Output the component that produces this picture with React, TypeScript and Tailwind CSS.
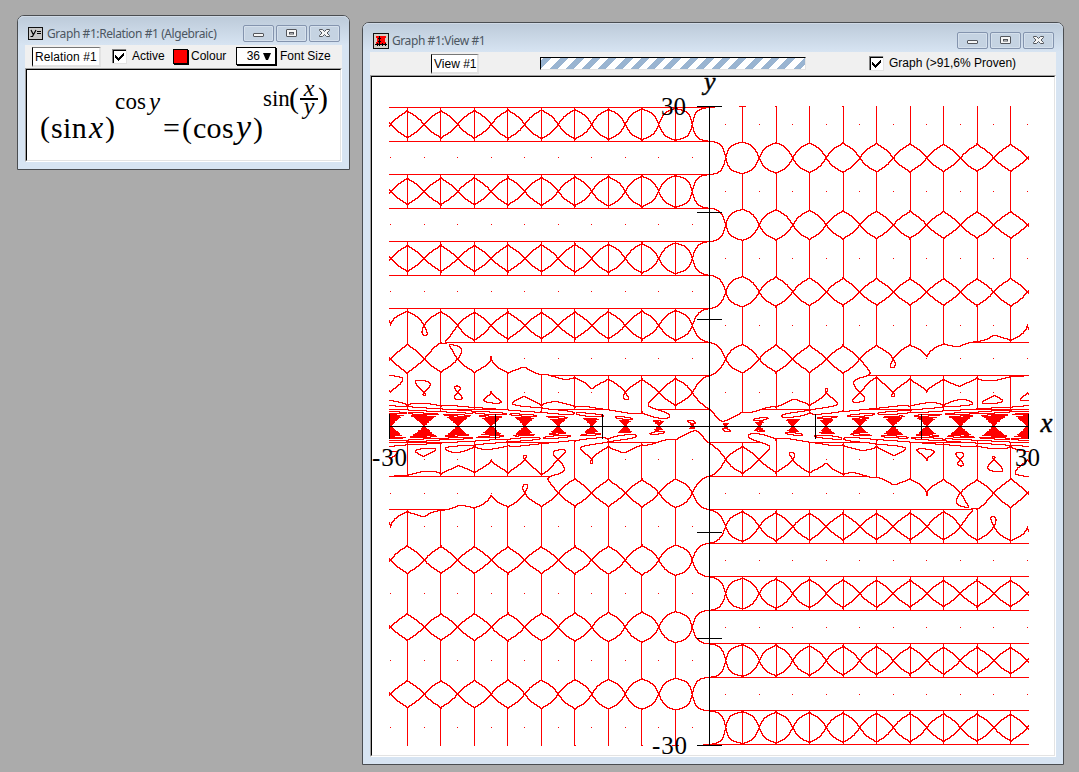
import React, { useMemo } from "react";

const SIZE = 640;
const LIMIT = 30;
const LEFT = 389;
const TOP = 106;

/** Marks every pixel that holds a solution of (sin x)^(cos y) = (cos y)^(sin(x/y)). */
function traceRelation(): string {
  const grid = new Uint8Array(SIZE * SIZE);
  const unit = (2 * LIMIT) / SIZE;

  const scanRows = (from: number, to: number, sub: number) => {
    const n = SIZE * sub + 1;
    const xs = new Float64Array(n);
    const logSin = new Float64Array(n);
    for (let i = 0; i < n; i++) {
      xs[i] = -LIMIT + (i * unit) / sub + 1e-9;
      logSin[i] = Math.log(Math.abs(Math.sin(xs[i])));
    }
    let previous = new Uint8Array(n);
    let current = new Uint8Array(n);
    for (let j = from * sub; j <= to * sub; j++) {
      const y = LIMIT - (j * unit) / sub - 1e-9;
      const c = Math.cos(y);
      const logCos = Math.log(Math.abs(c));
      for (let i = 0; i < n; i++) {
        current[i] = c * logSin[i] - Math.sin(xs[i] / y) * logCos > 0 ? 1 : 0;
      }
      if (j > from * sub) {
        const row = Math.floor((j - 1) / sub) * SIZE;
        for (let i = 0; i < n - 1; i++) {
          const sum = current[i] + current[i + 1] + previous[i] + previous[i + 1];
          if (sum !== 0 && sum !== 4) grid[row + Math.floor(i / sub)] = 1;
        }
      }
      const swap = previous;
      previous = current;
      current = swap;
    }
  };
  scanRows(0, 290, 3);
  scanRows(290, 350, 10);
  scanRows(350, SIZE, 3);

  const toCol = (x: number) => Math.floor((x + LIMIT) / unit);
  const toRow = (y: number) => Math.floor((LIMIT - y) / unit);

  // Around sin x = 0: the pole of the left side while cos y < 0, and the
  // thin tips of the curve, narrower than a sample, while cos y > 0.
  for (let k = -9; k <= 9; k++) {
    if (k === 0) continue;
    const col = toCol(k * Math.PI);
    for (let row = 0; row < SIZE; row++) {
      for (let step = 0; step <= 4; step++) {
        const y = LIMIT - (row + step / 4) * unit - 1e-9;
        const c = Math.cos(y);
        if (c < 0) {
          if (step === 2) grid[row * SIZE + col] = 1;
          continue;
        }
        for (let side = 0; side <= 1; side++) {
          const x = -LIMIT + (col + side) * unit;
          const f = c * Math.log(Math.abs(Math.sin(x))) - Math.sin(x / y) * Math.log(c);
          if (f > 0) grid[row * SIZE + col] = 1;
        }
      }
    }
  }
  // Poles of the right side: cos y = 0 while sin(x/y) < 0.
  for (let k = -10; k < 10; k++) {
    const y = (k + 0.5) * Math.PI;
    const row = toRow(y);
    for (let col = 0; col < SIZE; col++) {
      if (Math.sin((-LIMIT + (col + 0.5) * unit) / y) < 0) grid[row * SIZE + col] = 1;
    }
  }
  // Isolated solutions where both bases have magnitude one.
  for (let k = -10; k < 10; k++) {
    for (let m = -9; m <= 9; m++) {
      if (m !== 0) {
        const col = toCol((k + 0.5) * Math.PI);
        if (col >= 0 && col < SIZE) grid[toRow(m * Math.PI) * SIZE + col] = 1;
      }
    }
  }

  let path = "";
  for (let row = 0; row < SIZE; row++) {
    for (let col = 0; col < SIZE; col++) {
      if (!grid[row * SIZE + col]) continue;
      const start = col;
      while (col < SIZE && grid[row * SIZE + col]) col++;
      path += `M${LEFT + start} ${TOP + row}h${col - start}v1h${start - col}z`;
    }
  }
  return path;
}

const Y_TICKS = [106, 212, 319, 532, 638, 745];
const X_TICKS = [389, 495, 602, 815, 921, 1028];

function Plot() {
  const path = useMemo(traceRelation, []);
  return (
    <svg width="682" height="678" viewBox="372 77 682 678" className="block overflow-visible">
      <path d={path} fill="#ff0000" shapeRendering="crispEdges" />
      <g fill="#000" shapeRendering="crispEdges">
        <rect x="389" y="426" width="640" height="1" />
        <rect x="709" y="106" width="1" height="640" />
        {Y_TICKS.map((y) => <rect key={y} x="697" y={y} width="25" height="1" />)}
        {X_TICKS.map((x) => <rect key={x} x={x} y="414" width="1" height="25" />)}
      </g>
      <g fill="#000" fontFamily="Liberation Serif, serif" fontSize="25">
        <text x="661" y="115">30</text>
        <text x="652" y="754" textLength="35">-30</text>
        <text x="372" y="466" textLength="35">-30</text>
        <text x="1015" y="466">30</text>
        <text x="1040.5" y="432" fontSize="27" fontStyle="italic" stroke="#000" strokeWidth=".4">x</text>
        <text x="704" y="90" fontSize="26" fontStyle="italic" stroke="#000" strokeWidth=".4">y</text>
      </g>
    </svg>
  );
}

function WindowButton({ kind }: { kind: "min" | "max" | "close" }) {
  return (
    <div className="flex h-[17px] w-[31px] items-center justify-center rounded-[2px] border border-[#8494ae] bg-[#c5d3e2] shadow-[inset_0_0_0_1px_#d5e0ec]">
      <svg width="13" height="11" viewBox="0 0 13 11" fill="#f6f6f6" stroke="#53565c">
        {kind === "min" && <rect x="1.5" y="5.5" width="10" height="3" rx=".5" />}
        {kind === "max" && (
          <>
            <rect x="1.5" y="1.5" width="10" height="7" rx=".5" />
            <rect x="4.5" y="4.5" width="4" height="1.500" />
          </>
        )}
        {kind === "close" && <path d="M1.5 1.5h3l2 2 2-2h3v1L9 5l2.500 2.500v1h-3l-2-2-2 2h-3v-1L4 5 1.500 2.500z" />}
      </svg>
    </div>
  );
}

interface FrameProps {
  title: string;
  icon: React.ReactNode;
  toolbar: React.ReactNode;
  className: string;
  children: React.ReactNode;
}

function Frame({ title, icon, toolbar, className, children }: FrameProps) {
  return (
    <section className={`absolute flex flex-col rounded-t-[7px] border border-[#4a4d51] bg-[#d7e4f2] px-[7px] pb-[7px] ${className}`}>
      <header className="-mx-[7px] flex h-[29px] shrink-0 items-center rounded-t-[6px] bg-linear-to-b from-[#bccad9] to-[#d7e4f2] pt-[6px] pr-[9px] pl-[10px] shadow-[inset_0_1px_0_#d0dae6]">
        <div className="flex w-[19px] shrink-0 items-center">{icon}</div>
        <h1 className="flex-1 font-['Noto_Sans'] text-[12px] leading-[16px] tracking-[-0.42px] whitespace-nowrap text-[#4c5661]">{title}</h1>
        <div className="flex gap-[2px]">
          <WindowButton kind="min" />
          <WindowButton kind="max" />
          <WindowButton kind="close" />
        </div>
      </header>
      <div className="flex h-[23px] shrink-0 items-center bg-[#f0f0f0] pb-px font-['Liberation_Sans'] text-[12px] leading-[14px] text-black">{toolbar}</div>
      <div className="min-h-0 flex-1 border border-t-[#a0a0a0] border-r-white border-b-white border-l-[#a0a0a0]">
        <div className="h-full border border-t-black border-r-[#e3e3e3] border-b-[#e3e3e3] border-l-black bg-white">{children}</div>
      </div>
    </section>
  );
}

function Field({ text, className }: { text: string; className: string }) {
  return (
    <div className={`mt-px h-[20px] border-t border-r-2 border-b-2 border-l border-t-[#777] border-r-[#e3e3e3] border-b-[#e3e3e3] border-l-black bg-white pl-[2px] leading-[18px] whitespace-nowrap ${className}`}>{text}</div>
  );
}

function CheckBox() {
  return (
    <svg width="15" height="15" viewBox="0 0 15 15" className="shrink-0" shapeRendering="crispEdges">
      <rect width="15" height="15" fill="#e3e3e3" />
      <rect width="14" height="14" fill="#808080" />
      <rect x="1" y="1" width="13" height="13" fill="#000" />
      <rect x="2" y="2" width="12" height="12" fill="#fff" />
      <path d="M3 6v3l3 3 6-6V3L6 9z" fill="#000" />
    </svg>
  );
}

function Formula() {
  return (
    <div className="flex items-start pl-[13px] font-['Liberation_Serif'] text-[30px] leading-none whitespace-nowrap text-black">
      <span className="mt-[42px] w-[11px]">(</span>
      <span className="mt-[43px] w-[38px] tracking-[0.4px]">sin</span>
      <span className="mt-[41px] w-[16px] text-[32px] italic">x</span>
      <span className="mt-[42px] w-[10px]">)</span>
      <span className="mt-[20px] w-[34px] text-[23px] tracking-[0.2px]">cos</span>
      <span className="mt-[19px] w-[14px] text-[25px] italic">y</span>
      <span className="mt-[43px] w-[19px]">=</span>
      <span className="mt-[43px] w-[11px]">(</span>
      <span className="mt-[43px] w-[43px] tracking-[0.3px]">cos</span>
      <span className="mt-[40px] w-[17px] text-[34px] italic">y</span>
      <span className="mt-[43px] w-[10px]">)</span>
      <span className="mt-[17px] w-[26px] text-[23px]">sin</span>
      <span className="mt-[13px] w-[11px] text-[30px]">(</span>
      <span className="mt-[8px] flex w-[18px] flex-col items-center text-[24px] italic">
        <span className="h-[20px] leading-[20px]">x</span>
        <span className="h-[2px] w-[18px] bg-black" />
        <span className="h-[12px] leading-[12px]">y</span>
      </span>
      <span className="mt-[13px] text-[30px]">)</span>
    </div>
  );
}

const relationIcon = (
  <svg width="15" height="13" viewBox="0 0 15 13">
    <rect x=".5" y=".5" width="14" height="12" fill="#c8c8c8" stroke="#111" />
    <path d="M3 3l2.500 5M8 3L4.500 9.500H2.500M9 4.500h4M9 6.500h4" fill="none" stroke="#000" strokeWidth="1.200" />
  </svg>
);

const viewIcon = (
  <svg width="16" height="16" viewBox="0 0 16 16" shapeRendering="crispEdges">
    <rect width="16" height="16" rx="1" fill="#111" />
    <rect x="1" y="1" width="14" height="14" fill="#d4d0c8" />
    <path d="M3 3h10v2h-1v4h1v3H3V9h1V5H3z" fill="#f00" />
    <path d="M6 3h1v10H6zM2 11h12v1H2zM4 10h1v3H4zM9 10h1v3H9zM12 10h1v3h-1zM5 5h3v1H5zM5 8h3v1H5z" fill="#000" />
  </svg>
);

export default function App() {
  return (
    <main className="relative h-[772px] w-[1079px] overflow-hidden bg-[#ababab]">
      <Frame
        title="Graph #1:Relation #1 (Algebraic)"
        icon={relationIcon}
        className="top-[15px] left-[17px] h-[155px] w-[333px]"
        toolbar={
          <>
            <Field text="Relation #1" className="ml-[7px] w-[69px] tracking-[0.1px]" />
            <div className="ml-[11px] flex w-[61px] items-center gap-[5px]"><CheckBox />Active</div>
            <div className="flex items-center gap-[3px]">
              <span className="h-[15px] w-[15px] border border-black bg-[#ff0000] shadow-[1px_1px_0_#000]" />
              <span className="w-[45px]">Colour</span>
            </div>
            <div className="flex h-[18px] w-[40px] items-center justify-end gap-[3px] border border-black bg-white pr-[4px] shadow-[1px_1px_0_#000]">
              36
              <svg width="8" height="7" viewBox="0 0 8 7"><path d="M0 0h8L5 7H3z" /></svg>
            </div>
            <span className="ml-[4px] whitespace-nowrap">Font Size</span>
          </>
        }
      >
        <Formula />
      </Frame>
      <Frame
        title="Graph #1:View #1"
        icon={viewIcon}
        className="top-[22px] left-[362px] h-[743px] w-[702px]"
        toolbar={
          <>
            <Field text="View #1" className="ml-[61px] w-[48px]" />
            <div className="ml-[61px] h-[13px] w-[266px] border border-t-black border-r-[#e3e3e3] border-b-[#e3e3e3] border-l-black bg-[repeating-linear-gradient(135deg,#fff_0_2px,#99b4d1_2px_7.600px,#fff_7.600px_11.500px)]" />
            <div className="ml-[63px] flex items-center gap-[5px] whitespace-nowrap"><CheckBox />Graph (&gt;91,6% Proven)</div>
          </>
        }
      >
        <Plot />
      </Frame>
    </main>
  );
}
